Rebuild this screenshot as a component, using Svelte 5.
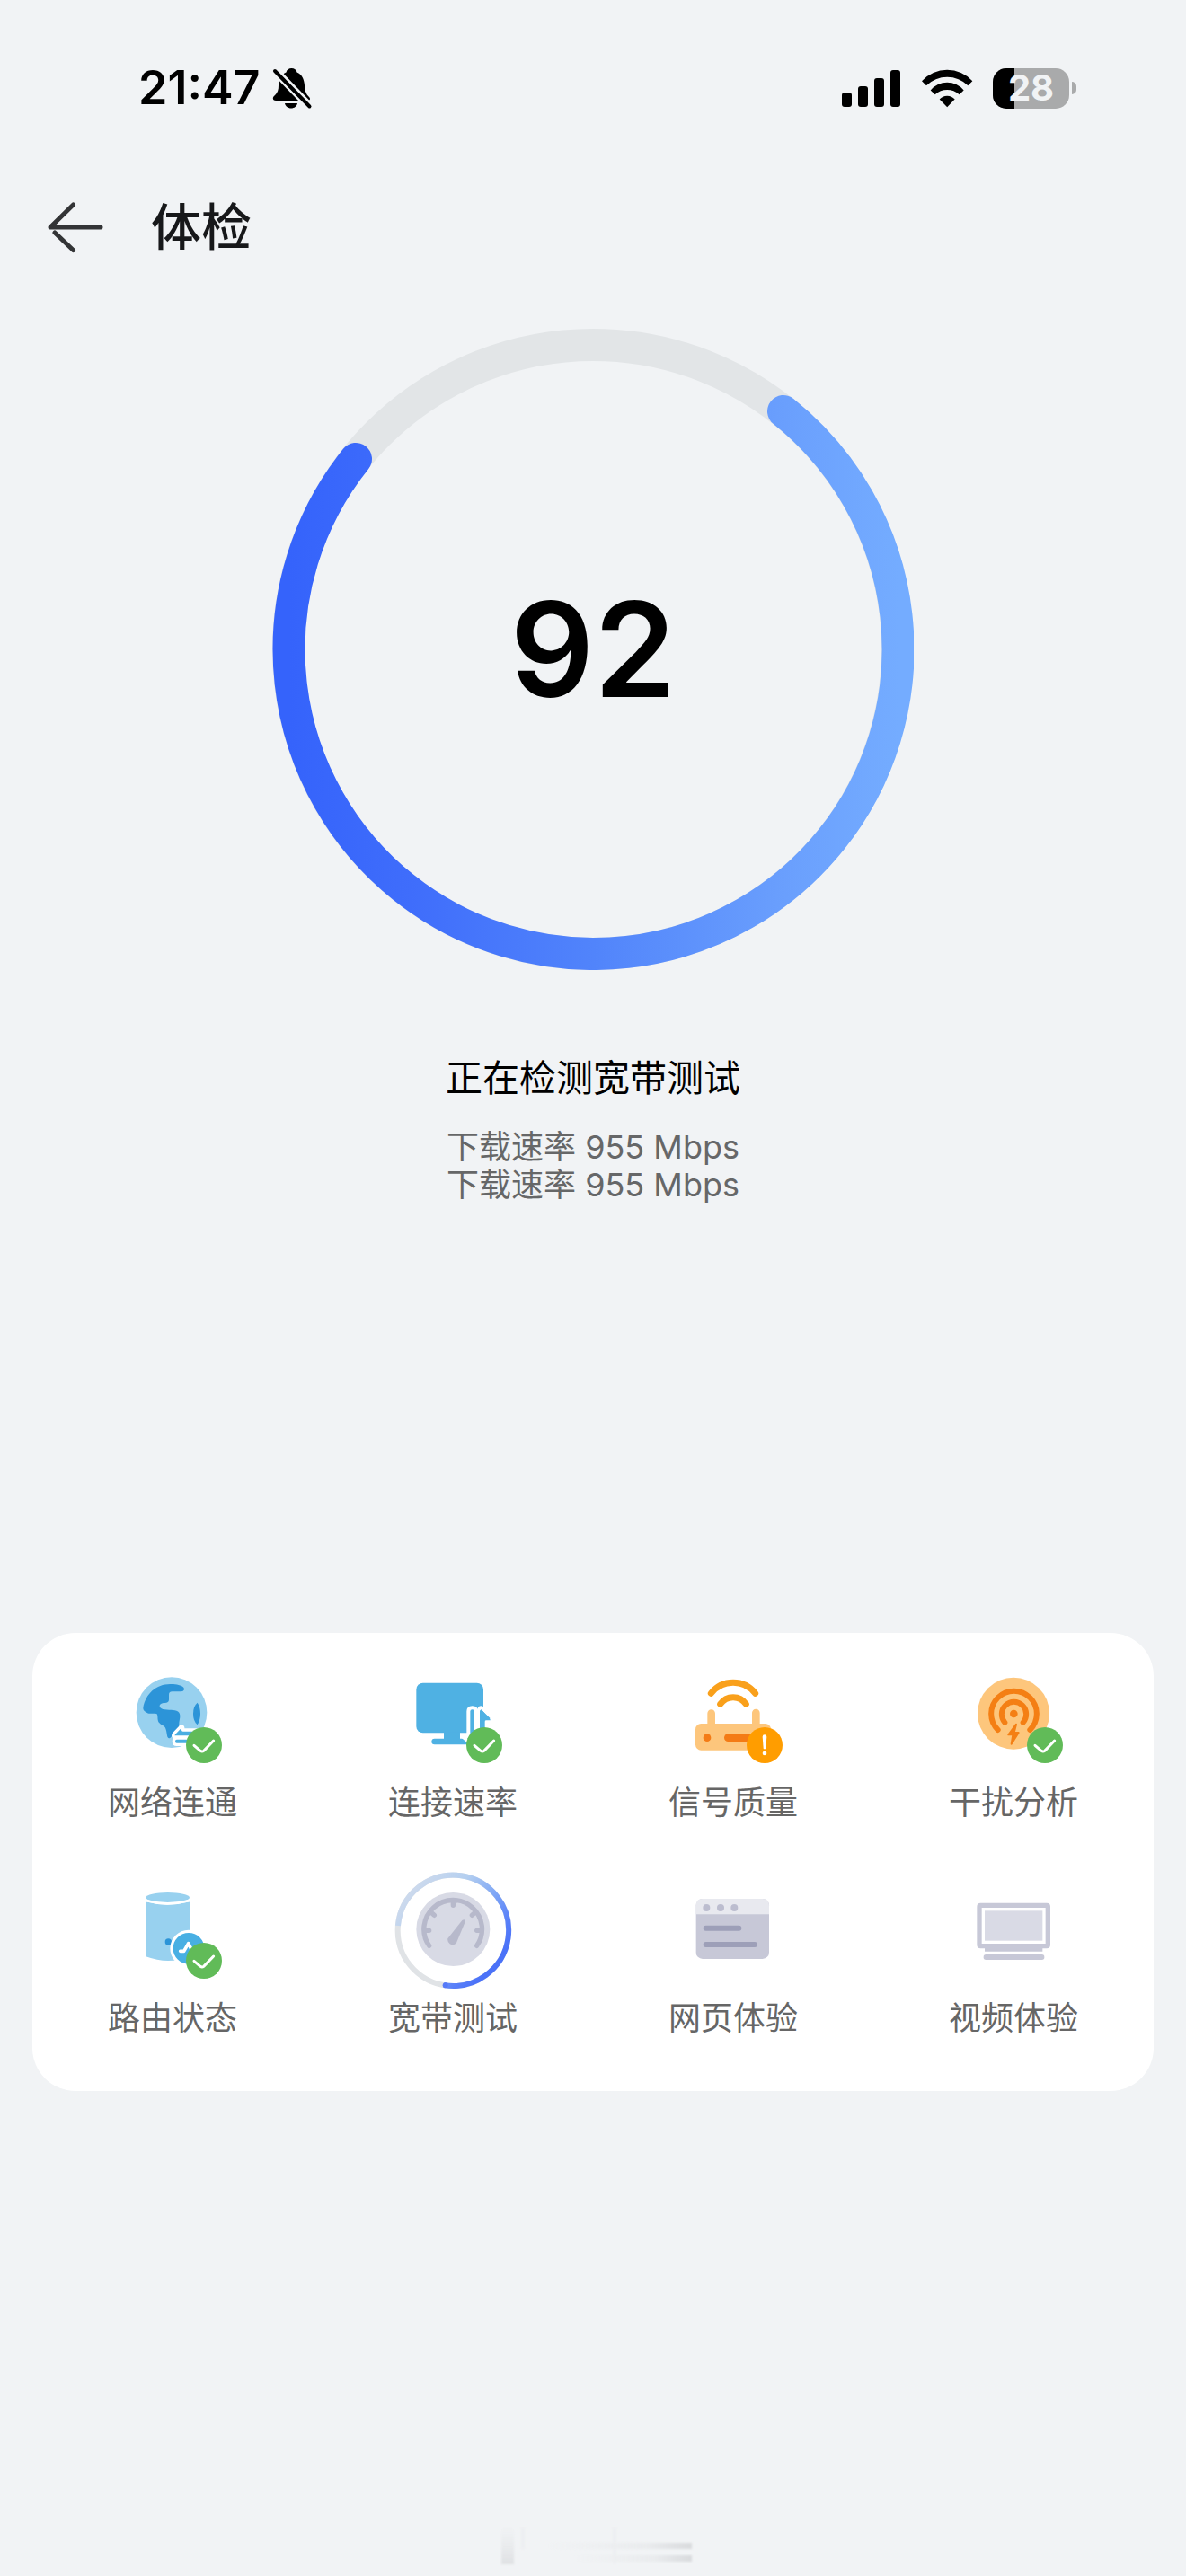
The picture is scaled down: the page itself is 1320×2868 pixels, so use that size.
<script>
  const score = 92
  const battery = 28

  const rates = ['下载速率 955 Mbps', '下载速率 955 Mbps']

  const checks = [
    { id: 'network', label: '网络连通', status: 'ok', box: '78 6 396 396' },
    { id: 'speed', label: '连接速率', status: 'ok', box: '84 6 396 396' },
    { id: 'signal', label: '信号质量', status: 'warn', box: '90 6 396 396' },
    { id: 'interference', label: '干扰分析', status: 'ok', box: '96 6 396 396' },
    { id: 'router', label: '路由状态', status: 'ok', box: '78 36 396 396' },
    { id: 'broadband', label: '宽带测试', status: 'running', box: '84 36 396 396' },
    { id: 'web', label: '网页体验', status: 'idle', box: '90 36 396 396' },
    { id: 'video', label: '视频体验', status: 'idle', box: '1026 36 396 396' }
  ]
</script>

<div class="page">
  <div class="status-bar">
    <div class="clock">
      <span class="time">21:47</span>
      <svg class="bell" viewBox="302 74 46 48" aria-hidden="true">
        <path d="M324.5 76c3 0 5.500 1.600 6 4.500C336 83 338.500 88 339 95c.4 7 2 10 5 13 2 2 1 4-2 4h-35c-3.500 0-4.500-3.500-1-6 3-3 4-6 4-11 .3-7 3-12 8.500-14.500.5-2.900 3-4.500 6-4.500z" />
        <path d="M317 115h14c-.6 3.300-3.500 5.500-7 5.500s-6.400-2.200-7-5.500z" />
        <path class="gap" d="M303 75.500L347 121" />
        <path class="slash" d="M306 79L344.500 118.500" />
      </svg>
    </div>
    <div class="indicators">
      <svg class="cell" viewBox="0 0 66 42" aria-hidden="true">
        <rect x="0" y="26" width="11" height="16" rx="3" />
        <rect x="18" y="19" width="11" height="23" rx="3" />
        <rect x="36" y="10" width="11" height="32" rx="3" />
        <rect x="54" y="1" width="11" height="41" rx="3" />
      </svg>
      <svg class="wifi" viewBox="373 74 174 128" aria-hidden="true">
        <path d="M376 113A115 115 0 0 1 545 113L530 128A100 100 0 0 0 391 128z" />
        <path d="M405 144A72 72 0 0 1 516 144L501 158A61 61 0 0 0 420 158z" />
        <path d="M435 174A34 34 0 0 1 486 174L460.500 200z" />
      </svg>
      <div class="battery">
        <div class="battery-body">
          <div class="battery-level" style={`width:${battery}%`}></div>
          <span class="battery-text">{battery}</span>
        </div>
        <div class="battery-tip"></div>
      </div>
    </div>
  </div>

  <header class="header">
    <button class="back" type="button" aria-label="返回">
      <svg viewBox="52 222 64 60" aria-hidden="true">
        <path d="M112 252H56L81.500 227M61 258L81.500 277.500" />
      </svg>
    </button>
    <h1>体检</h1>
  </header>

  <main>
    <div class="gauge">
      <svg viewBox="0 0 714 714" aria-hidden="true">
        <defs>
          <linearGradient id="gauge-arc" x1="0" y1="0" x2="1" y2="0">
            <stop offset="0" stop-color="#3563fb" />
            <stop offset="0.2" stop-color="#3f6dfb" />
            <stop offset="0.5" stop-color="#5184fb" />
            <stop offset="0.8" stop-color="#699efd" />
            <stop offset="1" stop-color="#74acff" />
          </linearGradient>
        </defs>
        <circle class="track" cx="357" cy="357" r="339" />
        <path class="arc" d="M93 145A339 339 0 1 0 569 92" />
      </svg>
      <span class="score">{score}</span>
    </div>

    <h2>正在检测宽带测试</h2>
    <div class="rates">
      {#each rates as rate}
        <p>{rate}</p>
      {/each}
    </div>

    <ul class="card">
      {#each checks as check (check.id)}
        <li class="check">
          <div class="icon">
            <svg viewBox={check.box} aria-hidden="true">
              {#if check.id === 'network'}
                <circle cx="273" cy="200" r="118" fill="#98d1ef" />
                <path
                  fill="#2c94d8"
                  d="M178 184C186 136 224 103 272 105c18 0 33 4 41 11 5 8-1 14-11 14h-27c-8 0-11 4-11 11v16c0 8-5 11-14 11-11 0-18 5-17 11 2 7 9 10 17 11 20 3 39-1 48 10 7 12 0 25 0 38 0 19-9 23-18 34l-12 13c-6 3-9-2-10-8-2-12-3-21-7-28-7-7-19-10-23-20-3-9 0-18-4-24-9-4-24 1-33-4-9-5-14-9-13-17z"
                />
                <path fill="#2c94d8" d="M359 167q10 15 10 36t-10 38q-14-12-14-37t14-37z" />
                <path
                  fill="#4aaee1"
                  stroke="#fff"
                  stroke-width="10"
                  stroke-linejoin="round"
                  d="M280 271L303 247q6-3 8 3v8h70v24H281q-5-4-1-11zM290 285h80v22h-80q-10 0-10-11t10-11z"
                />
              {:else if check.id === 'speed'}
                <rect x="160" y="101" width="224" height="167" rx="22" fill="#4fb1e3" />
                <path fill="#4fb1e3" d="M252 266h54v21h34v20H221q-10 0-10-10t10-10h31z" />
                <path
                  fill="#4fb1e3"
                  stroke="#fff"
                  stroke-width="12"
                  stroke-linejoin="round"
                  d="M334 280v-84q0-12 13-12t13 12v110h-15L316 281q4-8 18-1zM370 300V193q0-13 12-7l30 34q4 11-7 12h-12v68z"
                />
                <path fill="#4fb1e3" d="M376 190l30 28q1 5-4 6h-13v40h-17v-70z" />
              {:else if check.id === 'signal'}
                <path
                  fill="none"
                  stroke="#f9a01b"
                  stroke-width="21"
                  stroke-linecap="round"
                  d="M214 136A94 94 0 0 1 362 136M245 172A52 52 0 0 1 331 172"
                />
                <path
                  stroke="#fdc67c"
                  stroke-width="26"
                  stroke-linecap="round"
                  d="M215 203v50M364 201v50"
                />
                <rect x="162" y="237" width="252" height="89" rx="19" fill="#fdc67c" />
                <circle cx="201" cy="284" r="13" fill="#f47b15" />
                <rect x="258" y="271" width="110" height="26" rx="13" fill="#f47b15" />
              {:else if check.id === 'interference'}
                <circle cx="294" cy="203" r="120" fill="#fdc67c" />
                <g fill="none" stroke="#f47f14" stroke-width="18" stroke-linecap="round">
                  <path d="M242 258A76 76 0 1 1 349 258" />
                  <path d="M265 233A41 41 0 1 1 326 233" />
                </g>
                <circle cx="295" cy="204" r="13" fill="#f47f14" />
                <path
                  fill="#f47f14"
                  stroke="#f47f14"
                  stroke-width="6"
                  stroke-linejoin="round"
                  d="M303 239l-26 35h15l-5 31 24-38h-15z"
                />
              {:else if check.id === 'router'}
                <path fill="#98d1ef" d="M187 142q70 20 146 0v183q-70 28-146 0z" />
                <ellipse cx="260" cy="128" rx="73" ry="17" fill="#98d1ef" />
                <path fill="none" stroke="#fff" stroke-width="8" d="M187 138q72 20 146 0" />
                <circle cx="262" cy="276" r="11" fill="#2c94d8" />
                <circle cx="330" cy="298" r="57" fill="#48afe3" stroke="#fff" stroke-width="10" />
                <path
                  fill="none"
                  stroke="#fff"
                  stroke-width="11"
                  stroke-linecap="round"
                  stroke-linejoin="round"
                  d="M302 307h12l15-26 12 24"
                />
              {:else if check.id === 'broadband'}
                <defs>
                  <linearGradient
                    id="spinner-arc"
                    gradientUnits="userSpaceOnUse"
                    x1="130"
                    y1="130"
                    x2="410"
                    y2="360"
                  >
                    <stop offset="0" stop-color="#cbd9ed" />
                    <stop offset="0.3" stop-color="#b4cff0" />
                    <stop offset="0.6" stop-color="#7ea6f6" />
                    <stop offset="0.85" stop-color="#587ff9" />
                    <stop offset="1" stop-color="#4b72f8" />
                  </linearGradient>
                </defs>
                <circle cx="283" cy="238" r="185" fill="none" stroke="#e0e3e6" stroke-width="18" />
                <path
                  fill="none"
                  stroke="url(#spinner-arc)"
                  stroke-width="18"
                  d="M99 222A185 185 0 1 1 252 420"
                />
                <circle cx="257" cy="421" r="9" fill="#5579f8" />
                <circle cx="283" cy="234" r="123" fill="#d8dae5" />
                <g fill="none" stroke="#b7b9cb" stroke-width="16" stroke-linecap="round">
                  <path d="M203 289A97 97 0 1 1 362 289" />
                  <path d="M283 146v8M213 181l7 6M353 181l-7 6M190 238h13M376 238h-14" />
                </g>
                <path fill="#b7b9cb" d="M265 265l48-61q9-6 11 3l-30 72q-9 11-22 4-9-8-7-18z" />
              {:else if check.id === 'web'}
                <rect x="164" y="132" width="244" height="201" rx="22" fill="#c7c8d7" />
                <path fill="#e8e9ef" d="M164 184v-30q0-22 22-22h200q22 0 22 22v30z" />
                <g fill="#bcbdcf">
                  <circle cx="199" cy="162" r="12" />
                  <circle cx="246" cy="162" r="12" />
                  <circle cx="292" cy="162" r="12" />
                </g>
                <g stroke="#9d9fb8" stroke-width="18" stroke-linecap="round">
                  <path d="M197 230h110M197 285h163" />
                </g>
              {:else}
                <rect x="1110" y="154" width="229" height="136" rx="4" fill="#fff" stroke="#c7c8d7" stroke-width="16" />
                <rect x="1128" y="172" width="193" height="100" fill="#d9dae5" />
                <path fill="#c7c8d7" d="M1128 296h193v12h-193z" />
                <rect x="1124" y="318" width="203" height="18" rx="8" fill="#c7c8d7" />
              {/if}
            </svg>
            {#if check.status === 'ok'}
              <svg class="badge" viewBox="0 0 120 120" role="img" aria-label="正常">
                <circle cx="60" cy="60" r="60" fill="#61bb58" />
                <path
                  fill="none"
                  stroke="#fff"
                  stroke-width="9"
                  stroke-linecap="round"
                  stroke-linejoin="round"
                  d="M27 61L48 79q6 4 11 0L92 45"
                />
              </svg>
            {:else if check.status === 'warn'}
              <svg class="badge" viewBox="0 0 120 120" role="img" aria-label="异常">
                <circle cx="60" cy="60" r="60" fill="#ff9d00" />
                <path fill="#fff" d="M53 32q0-7 7-7t7 7l-3 38q-4 7-8 0z" />
                <circle cx="60" cy="87" r="7" fill="#fff" />
              </svg>
            {/if}
          </div>
          <span class="label">{check.label}</span>
        </li>
      {/each}
    </ul>
  </main>

  <svg class="smudge" viewBox="0 0 240 44" aria-hidden="true">
    <defs>
      <linearGradient id="fade-down" x1="0" y1="0" x2="0" y2="1">
        <stop offset="0" stop-color="#e4e6e8" stop-opacity="0" />
        <stop offset="1" stop-color="#dfe1e3" />
      </linearGradient>
      <linearGradient id="fade-right" x1="0" y1="0" x2="1" y2="0">
        <stop offset="0" stop-color="#eceef0" stop-opacity="0" />
        <stop offset="0.7" stop-color="#e9ebed" />
        <stop offset="1" stop-color="#d9dbdd" />
      </linearGradient>
    </defs>
    <g class="soft">
      <rect x="18" y="0" width="14" height="41" fill="url(#fade-down)" />
      <rect x="40" y="0" width="4" height="24" fill="#edeff1" />
      <rect x="142" y="0" width="4" height="40" fill="#edeff1" />
      <rect x="70" y="17" width="160" height="7" fill="url(#fade-right)" />
      <rect x="100" y="31" width="130" height="7" fill="url(#fade-right)" />
    </g>
  </svg>
</div>

<style>
  :global(body) {
    background: #f1f3f5;
  }
  .page {
    display: flex;
    flex-direction: column;
    box-sizing: border-box;
    min-height: 100vh;
    padding-bottom: 10px;
    font-family: Inter, 'Noto Sans CJK SC', sans-serif;
    color: #000000;
  }
  .status-bar {
    display: flex;
    align-items: center;
    justify-content: space-between;
    height: 196px;
    padding: 0 122px 0 154px;
  }
  .clock {
    display: flex;
    align-items: center;
    gap: 12px;
  }
  .time {
    font-size: 52px;
    line-height: 64px;
    font-weight: 600;
  }
  .bell {
    width: 46px;
    height: 48px;
  }
  .gap,
  .slash {
    fill: none;
    stroke: #f1f3f5;
    stroke-width: 9;
  }
  .slash {
    stroke: #000000;
    stroke-width: 4;
    stroke-linecap: round;
  }
  .indicators {
    display: flex;
    align-items: center;
    gap: 22px;
  }
  .cell {
    width: 66px;
    height: 42px;
  }
  .wifi {
    width: 58px;
    height: 43px;
  }
  .battery {
    display: flex;
    align-items: center;
    gap: 3px;
  }
  .battery-body {
    position: relative;
    display: flex;
    align-items: center;
    justify-content: center;
    width: 85px;
    height: 45px;
    border-radius: 15px;
    background: #a9aaab;
  }
  .battery-level {
    position: absolute;
    inset: 0 auto 0 0;
    border-radius: 15px 0 0 15px;
    background: #000000;
  }
  .battery-text {
    position: relative;
    font-size: 40px;
    line-height: 48px;
    font-weight: 700;
    color: #f1f3f5;
  }
  .battery-tip {
    width: 5px;
    height: 14px;
    border-radius: 0 5px 5px 0;
    background: #a9aaab;
  }
  .header {
    display: flex;
    align-items: center;
    gap: 52px;
    height: 114px;
    padding: 0 52px;
  }
  .back {
    display: block;
    padding: 0;
    border: none;
    background: none;
    cursor: pointer;
  }
  .back svg {
    display: block;
    width: 64px;
    height: 60px;
    fill: none;
    stroke: #333436;
    stroke-width: 5;
    stroke-linecap: round;
    stroke-linejoin: round;
  }
  h1,
  h2,
  p,
  ul {
    margin: 0;
    padding: 0;
  }
  h1 {
    font-size: 56px;
    line-height: 72px;
    font-weight: 500;
    color: #17181a;
  }
  .gauge {
    position: relative;
    max-width: 714px;
    margin: 56px auto 0;
  }
  .gauge svg {
    display: block;
    width: 100%;
  }
  .track,
  .arc {
    fill: none;
    stroke: #e2e5e7;
    stroke-width: 36;
  }
  .arc {
    stroke: url(#gauge-arc);
    stroke-linecap: round;
  }
  .score {
    position: absolute;
    inset: 0;
    display: flex;
    align-items: center;
    justify-content: center;
    font-size: 146px;
    font-weight: 600;
  }
  h2 {
    margin-top: 92px;
    font-size: 41px;
    line-height: 56px;
    font-weight: 400;
    text-align: center;
  }
  .rates {
    margin-top: 28px;
    font-size: 36px;
    line-height: 42px;
    text-align: center;
    color: #666768;
  }
  .card {
    display: grid;
    grid-template-columns: repeat(4, 1fr);
    row-gap: 50px;
    margin: 478px 36px 0;
    padding: 24px 0 56px;
    border-radius: 48px;
    background: #ffffff;
    list-style: none;
  }
  .check {
    display: flex;
    flex-direction: column;
    align-items: center;
    gap: 8px;
  }
  .icon {
    position: relative;
    width: 132px;
    height: 132px;
  }
  .icon svg {
    display: block;
    width: 100%;
    height: 100%;
  }
  .icon .badge {
    position: absolute;
    right: 11px;
    bottom: 11px;
    width: 40px;
    height: 40px;
  }
  .label {
    font-size: 36px;
    line-height: 50px;
    color: #666666;
  }
  .smudge {
    align-self: center;
    width: 240px;
    height: 44px;
    margin-top: auto;
  }
  .soft {
    filter: blur(1px);
  }
</style>
